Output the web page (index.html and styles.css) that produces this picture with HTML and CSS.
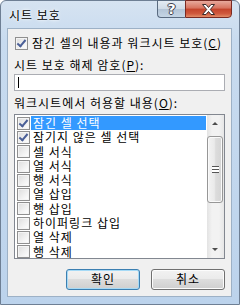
FILE: index.html
```html
<!DOCTYPE html>
<html>

<head lang="ko">
    <meta charset="UTF-8">
    <title>시트 보호</title>
    <link rel="stylesheet" href="styles.css">
</head>

<body>
    <div class="window">
        <!-- 제목 표시줄 -->
        <div class="titlebar">
            <span class="title">시트 보호</span>
            <div class="caption-btns">
                <a href="javascript:;" class="btn-help">?</a>
                <a href="javascript:;" class="btn-close">
                    <svg width="15" height="11" viewBox="0 0 15 11">
                        <path d="M1.5 0.5h3.5l2.5 3 2.5-3h3.5l-4.2 5 4.2 5h-3.5l-2.5-3-2.5 3h-3.5l4.2-5z" fill="#fff" stroke="#3a2a2a" stroke-width="1" stroke-linejoin="round" />
                    </svg>
                </a>
            </div>
        </div>

        <!-- 본문 -->
        <div class="client">
            <label class="check-row">
                <span class="cb checked"></span>
                <span>잠긴 셀의 내용과 워크시트 보호(<u>C</u>)</span>
            </label>

            <div class="label">시트 보호 해제 암호(<u>P</u>):</div>
            <div class="input"><span class="caret"></span></div>

            <div class="label label2">워크시트에서 허용할 내용(<u>O</u>):</div>
            <div class="listbox">
                <ul class="items">
                    <li class="sel"><span class="cb checked"></span><span class="txt">잠긴 셀 선택</span></li>
                    <li><span class="cb checked"></span><span class="txt">잠기지 않은 셀 선택</span></li>
                    <li><span class="cb"></span><span class="txt">셀 서식</span></li>
                    <li><span class="cb"></span><span class="txt">열 서식</span></li>
                    <li><span class="cb"></span><span class="txt">행 서식</span></li>
                    <li><span class="cb"></span><span class="txt">열 삽입</span></li>
                    <li><span class="cb"></span><span class="txt">행 삽입</span></li>
                    <li><span class="cb"></span><span class="txt">하이퍼링크 삽입</span></li>
                    <li><span class="cb"></span><span class="txt">열 삭제</span></li>
                    <li><span class="cb"></span><span class="txt">행 삭제</span></li>
                </ul>
                <div class="scrollbar">
                    <div class="arr up"></div>
                    <div class="track">
                        <div class="thumb"><span class="grip"></span></div>
                    </div>
                    <div class="arr down"></div>
                </div>
            </div>

            <div class="buttons">
                <a href="javascript:;" class="btn default">확인</a>
                <a href="javascript:;" class="btn">취소</a>
            </div>
        </div>
    </div>
</body>

</html>
```

FILE: styles.css
```css
/*초기화*/
body,
ul,
li {
    margin: 0;
    padding: 0;
}

ul {
    list-style: none;
}

a {
    text-decoration: none;
    color: #000;
}

body {
    width: 240px;
    height: 305px;
    overflow: hidden;
    font: 12px/14px "Noto Sans CJK KR", "Liberation Sans", sans-serif;
    letter-spacing: 1px;
    color: #000;
    background: #fff;
}

u {
    text-decoration: underline;
    text-underline-offset: 1px;
}

/*창 테두리*/
.window {
    box-sizing: border-box;
    width: 240px;
    height: 305px;
    border: 1px solid #6e7f94;
    border-radius: 6px 6px 0 0;
    background: linear-gradient(to bottom, #d6e3f1 0, #c8dbef 40px, #bcd3ec 100%);
    display: flex;
    flex-direction: column;
}

.titlebar {
    height: 27px;
    display: flex;
    justify-content: space-between;
    align-items: flex-start;
}

.title {
    margin: 7px 0 0 8px;
    text-shadow: 0 0 4px #fff, 0 0 2px #fff;
}

.caption-btns {
    display: flex;
    margin-right: 7px;
    margin-top: -1px;
}

.btn-help,
.btn-close {
    height: 18px;
    box-sizing: border-box;
    border: 1px solid #5a6b80;
    display: flex;
    align-items: center;
    justify-content: center;
    letter-spacing: 0;
}

.btn-help {
    width: 28px;
    border-radius: 0 0 0 4px;
    border-right: 0;
    background: linear-gradient(to bottom, #e3ebf3 0, #cfdbe7 50%, #b3c4d6 51%, #c5d5e5 100%);
    font: bold 14px/16px "DejaVu Sans", sans-serif;
    color: #fff;
    text-shadow: 0 0 1px #333, 1px 0 0 #445, -1px 0 0 #445, 0 1px 0 #445, 0 -1px 0 #445;
}

.btn-close {
    width: 47px;
    border-radius: 0 0 4px 0;
    border-color: #7a2a22;
    background: linear-gradient(to bottom, #e8a99c 0, #d7725e 45%, #c4432b 50%, #d05a3e 80%, #e28d68 100%);
}

/*본문*/
.client {
    margin: 0 7px 7px 6px;
    flex: 1;
    border: 1px solid #9db1c6;
    background: #f0f0f0;
    padding: 0 6px 0 6px;
}

.check-row {
    display: flex;
    align-items: center;
    height: 14px;
    margin: 7px 0 0 1px;
}

.check-row .cb {
    margin-right: 4px;
}

.cb {
    box-sizing: border-box;
    width: 13px;
    height: 13px;
    flex: none;
    border: 1px solid #8f8f8f;
    background: linear-gradient(135deg, #dcdcdc 0, #f2f2f2 60%, #fff 100%);
    box-shadow: inset 0 0 0 1px #f4f4f4;
    position: relative;
}

.cb.checked::after {
    content: "";
    position: absolute;
    left: 3px;
    top: 0px;
    width: 3px;
    height: 7px;
    border: solid #4a5f97;
    border-width: 0 2px 2px 0;
    transform: rotate(40deg);
}

.label {
    margin-top: 8px;
    height: 14px;
}

.label2 {
    margin-top: 5px;
}

.input {
    box-sizing: border-box;
    height: 17px;
    margin-top: 2px;
    border: 1px solid #abadb3;
    background: #fff;
    padding: 2px 0 0 3px;
}

.caret {
    display: block;
    width: 1px;
    height: 11px;
    background: #000;
}

/*목록*/
.listbox {
    box-sizing: border-box;
    height: 145px;
    margin-top: 4px;
    border: 1px solid #828790;
    background: #fff;
    display: flex;
}

.items {
    flex: 1;
    padding: 1px 1px 0 2px;
}

.items li {
    height: 14.3px;
    display: flex;
    align-items: center;
}

.items .txt {
    margin-left: 1px;
    padding-left: 2px;
    flex: 1;
    height: 14.3px;
    line-height: 14px;
}

.items .sel .txt {
    background: #3399ff;
    color: #fff;
}

.scrollbar {
    width: 17px;
    display: flex;
    flex-direction: column;
    background: linear-gradient(to right, #e3e3e3, #f2f2f2 30%, #f2f2f2 70%, #e6e6e6);
}

.arr {
    height: 17px;
    position: relative;
}

.arr::after {
    content: "";
    position: absolute;
    left: 5px;
    border-left: 3px solid transparent;
    border-right: 3px solid transparent;
}

.up::after {
    top: 7px;
    border-bottom: 3px solid #4d4d4d;
}

.down::after {
    top: 7px;
    border-top: 3px solid #4d4d4d;
}

.track {
    flex: 1;
    padding-top: 4px;
}

.thumb {
    box-sizing: border-box;
    height: 67px;
    margin: 0 1px 0 0;
    border: 1px solid #979797;
    border-radius: 3px;
    background: linear-gradient(to right, #f3f3f3, #eaeaea 45%, #dcdcdc 55%, #d4d4d4);
    box-shadow: inset 0 0 0 1px #fafafa;
    display: flex;
    align-items: center;
    justify-content: center;
}

.grip {
    width: 7px;
    height: 5px;
    border-top: 1px solid #555;
    border-bottom: 1px solid #555;
    background: linear-gradient(#fff 2px, #555 2px, #555 3px, #fff 3px);
}

/*버튼*/
.buttons {
    display: flex;
    justify-content: flex-end;
    gap: 11px;
    margin-top: 10px;
    padding-right: 0;
}

.btn {
    box-sizing: border-box;
    width: 74px;
    height: 21px;
    border: 1px solid #707070;
    border-radius: 3px;
    background: linear-gradient(to bottom, #f2f2f2 0, #ebebeb 45%, #dddddd 50%, #cfcfcf 100%);
    box-shadow: inset 0 0 0 1px #fcfcfc;
    text-align: center;
    line-height: 18px;
}

.btn.default {
    border-color: #3c7fb1;
    box-shadow: inset 0 0 0 1px #a6daf6;
}
```
